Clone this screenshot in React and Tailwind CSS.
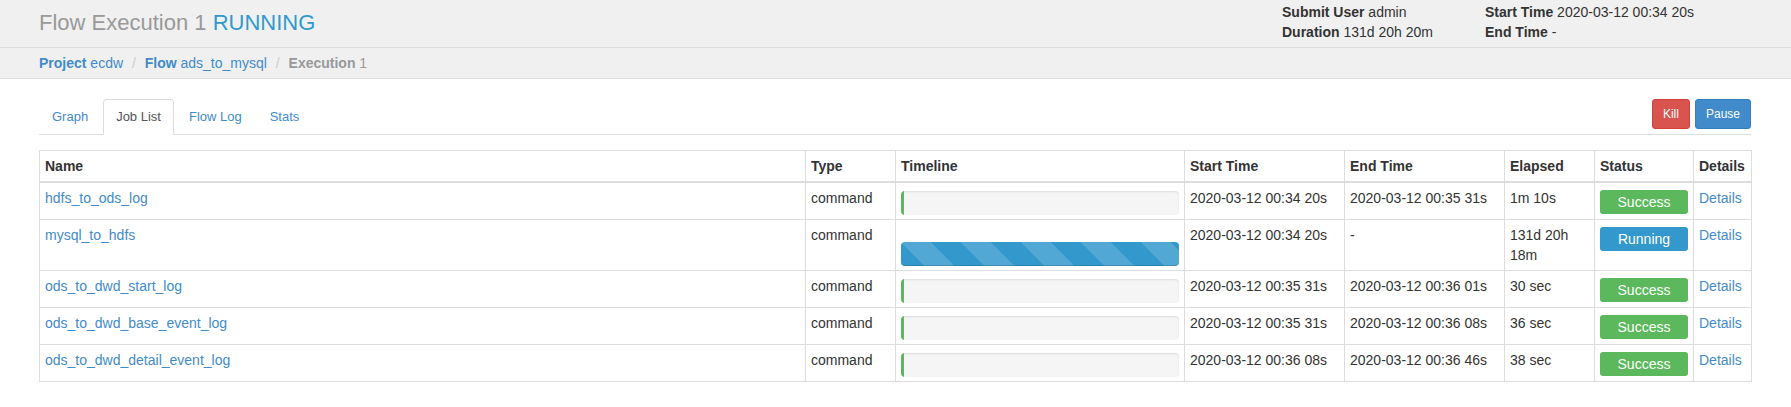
const jobs = [
  { name: "hdfs_to_ods_log", start: "2020-03-12 00:34 20s", end: "2020-03-12 00:35 31s", elapsed: "1m 10s", status: "Success" },
  { name: "mysql_to_hdfs", start: "2020-03-12 00:34 20s", end: "-", elapsed: "131d 20h 18m", status: "Running" },
  { name: "ods_to_dwd_start_log", start: "2020-03-12 00:35 31s", end: "2020-03-12 00:36 01s", elapsed: "30 sec", status: "Success" },
  { name: "ods_to_dwd_base_event_log", start: "2020-03-12 00:35 31s", end: "2020-03-12 00:36 08s", elapsed: "36 sec", status: "Success" },
  { name: "ods_to_dwd_detail_event_log", start: "2020-03-12 00:36 08s", end: "2020-03-12 00:36 46s", elapsed: "38 sec", status: "Success" },
];

const th = "border border-[#ddd] border-b-2 p-[5px] text-left font-bold leading-[20px] align-bottom";
const td = "border border-[#ddd] p-[5px] leading-[20px] align-top";

function Sep() {
  return <span className="px-[5px] text-[#ccc]">/{"\u00a0"}</span>;
}

export default function App() {
  return (
    <div className="min-h-[407px] bg-white font-['Liberation_Sans',Arial,sans-serif] text-[14px] leading-[20px] text-[#333]">
      {/* Header */}
      <div className="flex h-[47px] bg-[#f0f0f0] pl-[39px] pr-[40px]">
        <div className="pt-[11px] text-[22px] leading-[24px] text-[#999]">
          Flow Execution 1 <span className="text-[#3399cc]">RUNNING</span>
        </div>
        <div className="ml-auto flex pt-[2px]">
          <div className="w-[203px]">
            <div><span className="font-bold">Submit User</span> admin</div>
            <div><span className="font-bold">Duration</span> 131d 20h 20m</div>
          </div>
          <div className="w-[266px]">
            <div><span className="font-bold">Start Time</span> 2020-03-12 00:34 20s</div>
            <div><span className="font-bold">End Time</span> -</div>
          </div>
        </div>
      </div>

      {/* Breadcrumb */}
      <div className="h-[32px] border-y border-[#dddddd] bg-[#f0f0f0] pl-[39px] pt-[5px]">
        <span className="text-[#428bca]"><span className="font-bold">Project</span> ecdw</span>{" "}
        <Sep />
        <span className="text-[#428bca]"><span className="font-bold">Flow</span> ads_to_mysql</span>{" "}
        <Sep />
        <span className="text-[#999]"><span className="font-bold">Execution</span> 1</span>
      </div>

      {/* Main */}
      <div className="pl-[39px] pr-[40px] pt-[20px]">
        <div className="flex items-start border-b border-[#ddd]">
          <ul className="-mb-px flex text-[13px]">
            {["Graph", "Job List", "Flow Log", "Stats"].map((t) => {
              const active = t === "Job List";
              return (
                <li key={t} className="mr-[2px]">
                  <span
                    className={
                      active
                        ? "block rounded-t-[4px] border border-[#ddd] border-b-white bg-white px-[12px] py-[7px] leading-[20px] text-[#555]"
                        : "block rounded-t-[4px] border border-transparent px-[12px] py-[7px] leading-[20px] text-[#428bca]"
                    }
                  >
                    {t}
                  </span>
                </li>
              );
            })}
          </ul>
          <div className="ml-auto flex gap-[5px]">
            <button className="rounded-[3px] border border-[#d43f3a] bg-[#d9534f] px-[10px] py-[5px] text-[12px] leading-[18px] text-white">
              Kill
            </button>
            <button className="rounded-[3px] border border-[#357ebd] bg-[#428bca] px-[10px] py-[5px] text-[12px] leading-[18px] text-white">
              Pause
            </button>
          </div>
        </div>

        <table className="mt-[15px] w-full table-fixed border-collapse">
          <colgroup>
            <col className="w-[766px]" />
            <col className="w-[90px]" />
            <col className="w-[289px]" />
            <col className="w-[160px]" />
            <col className="w-[160px]" />
            <col className="w-[90px]" />
            <col className="w-[99px]" />
            <col className="w-[58px]" />
          </colgroup>
          <thead>
            <tr>
              <th className={th}>Name</th>
              <th className={th}>Type</th>
              <th className={th}>Timeline</th>
              <th className={th}>Start Time</th>
              <th className={th}>End Time</th>
              <th className={th}>Elapsed</th>
              <th className={th}>Status</th>
              <th className={th}>Details</th>
            </tr>
          </thead>
          <tbody>
            {jobs.map((j) => {
              const running = j.status === "Running";
              return (
                <tr key={j.name}>
                  <td className={td}>
                    <span className="text-[#428bca]">{j.name}</span>
                  </td>
                  <td className={td}>command</td>
                  <td className="border border-[#ddd] p-[5px] align-bottom">
                    {running ? (
                      <div className="-mb-px h-[24px] rounded-[4px] bg-[#3399cc] bg-[linear-gradient(45deg,rgba(255,255,255,.15)_25%,transparent_25%,transparent_50%,rgba(255,255,255,.15)_50%,rgba(255,255,255,.15)_75%,transparent_75%,transparent)] bg-[length:60px_60px] shadow-[inset_0_-1px_0_rgba(0,0,0,0.15)]" />
                    ) : (
                      <div className="-mb-px h-[24px] overflow-hidden rounded-[4px] bg-[#f5f5f5] shadow-[inset_0_1px_2px_rgba(0,0,0,0.1)]">
                        <div className="h-full w-[3px] bg-[#5cb85c]" />
                      </div>
                    )}
                  </td>
                  <td className={td}>{j.start}</td>
                  <td className={td}>{j.end}</td>
                  <td className={td}>{j.elapsed}</td>
                  <td className={td}>
                    <div
                      className={
                        running
                          ? "mt-[2px] rounded-[3px] bg-[#3399cc] py-[2px] text-center leading-[20px] text-white"
                          : "mt-[2px] rounded-[3px] bg-[#5cb85c] py-[2px] text-center leading-[20px] text-white"
                      }
                    >
                      {j.status}
                    </div>
                  </td>
                  <td className={td}>
                    <span className="text-[#428bca]">Details</span>
                  </td>
                </tr>
              );
            })}
          </tbody>
        </table>
      </div>
    </div>
  );
}
